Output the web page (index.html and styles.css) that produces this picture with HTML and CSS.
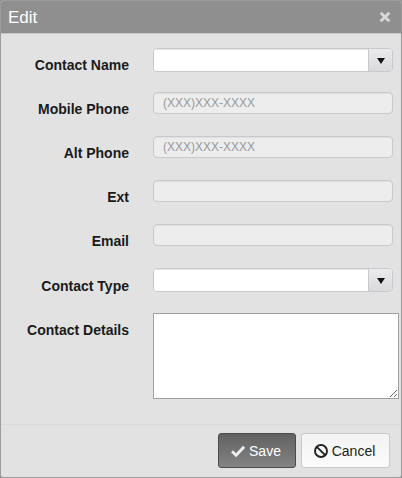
FILE: index.html
```
<!DOCTYPE html>
<html lang="en">
<head>
<meta charset="UTF-8">
<meta name="viewport" content="width=device-width, initial-scale=1.0">
<title>Edit</title>
<link rel="stylesheet" href="styles.css">
</head>
<body>

<div class="window">
  <header class="titlebar">
    <h1>Edit</h1>
    <button class="close-btn" aria-label="Close">
      <svg width="12" height="12" viewBox="0 0 12 12"><path d="M1.7 1.7l8.6 8.6M10.3 1.7l-8.6 8.6"/></svg>
    </button>
  </header>

  <form class="fields">
    <div class="row">
      <label for="name">Contact Name</label>
      <div class="combo">
        <input type="text" id="name">
        <span class="arrow"><svg width="8" height="6" viewBox="0 0 8 6"><path d="M0 0h8L4 6z"/></svg></span>
      </div>
    </div>
    <div class="row">
      <label for="mobile">Mobile Phone</label>
      <input class="textbox" type="text" id="mobile" placeholder="(XXX)XXX-XXXX">
    </div>
    <div class="row">
      <label for="alt">Alt Phone</label>
      <input class="textbox" type="text" id="alt" placeholder="(XXX)XXX-XXXX">
    </div>
    <div class="row">
      <label for="ext">Ext</label>
      <input class="textbox" type="text" id="ext">
    </div>
    <div class="row">
      <label for="email">Email</label>
      <input class="textbox" type="text" id="email">
    </div>
    <div class="row row-type">
      <label for="type">Contact Type</label>
      <div class="combo">
        <input type="text" id="type">
        <span class="arrow"><svg width="8" height="6" viewBox="0 0 8 6"><path d="M0 0h8L4 6z"/></svg></span>
      </div>
    </div>
    <div class="row row-details">
      <label for="details">Contact Details</label>
      <textarea id="details"></textarea>
    </div>
  </form>

  <footer class="buttons">
    <button class="btn save">
      <svg width="14" height="14" viewBox="0 0 14 14"><path d="M1 7.4l4.1 3.8 8-8.4"/></svg>
      Save
    </button>
    <button class="btn cancel">
      <svg width="14" height="14" viewBox="0 0 14 14"><circle cx="7" cy="7" r="6"/><path d="M2.8 2.8l8.4 8.4"/></svg>
      Cancel
    </button>
  </footer>
</div>

</body>
</html>
```

FILE: styles.css
```
* {
  box-sizing: border-box;
}
body {
  margin: 0;
  background: #8f8f8f;
  font-family: "Liberation Sans", Arial, sans-serif;
  font-size: 14px;
  color: #1a1a1a;
}
.window {
  display: flex;
  flex-direction: column;
  width: 402px;
  height: 478px;
  background: #e2e2e2;
  border: 1px solid #9b9b9b;
  border-radius: 3px;
  overflow: hidden;
}

/* title bar */
.titlebar {
  display: flex;
  justify-content: space-between;
  align-items: center;
  height: 33px;
  padding: 0 10px 0 7px;
  background: #8f8f8f;
  border-bottom: 1px solid #c6c6c6;
}
.titlebar h1 {
  margin: 0;
  padding-top: 1px;
  font-size: 17px;
  font-weight: normal;
  line-height: 32px;
  color: #fff;
}
.close-btn {
  display: flex;
  padding: 0;
  border: none;
  background: none;
  cursor: pointer;
}
.close-btn path {
  fill: none;
  stroke: #d9d9d9;
  stroke-width: 2.8;
}

/* form rows */
.fields {
  flex: 1;
  padding: 14px 0 0;
}
.row {
  display: grid;
  grid-template-columns: 128px 1fr;
  column-gap: 24px;
  align-items: start;
  height: 44px;
}
.row label {
  padding-top: 7px;
  line-height: 20px;
  font-weight: bold;
  text-align: right;
}
.row-type {
  height: 45px;
}
.row-type label {
  padding-top: 8px;
}
.row-details {
  height: 86px;
}
.textbox {
  width: 240px;
  height: 22px;
  padding: 0 9px;
  border: 1px solid #c9c9cd;
  border-radius: 4px;
  background: #ededed;
  box-shadow: inset 0 1px 1px #dfdfe1;
  font: 12px/20px "Liberation Sans", Arial, sans-serif;
}
.textbox::placeholder {
  color: #999;
}
.combo {
  display: flex;
  width: 240px;
  height: 24px;
  border: 1px solid #c9c9cd;
  border-radius: 4px;
  background: #fff;
  overflow: hidden;
}
.combo input {
  flex: 1;
  min-width: 0;
  padding: 0 8px;
  border: none;
  background: #fff;
  box-shadow: inset 0 1px 1px #e4e4e6;
}
.arrow {
  display: flex;
  justify-content: center;
  align-items: center;
  width: 24px;
  padding-top: 2px;
  border-left: 1px solid #c9c9cd;
  background: linear-gradient(#ebebed, #dadadd);
}
.arrow path {
  fill: #111;
}
textarea {
  width: 246px;
  height: 86px;
  border: 1px solid #a0a0a0;
  background: #fff;
}

/* bottom buttons */
.buttons {
  display: flex;
  justify-content: flex-end;
  gap: 5px;
  height: 53px;
  padding: 8px 11px 0 0;
  border-top: 1px solid #dadada;
}
.btn {
  display: flex;
  align-items: center;
  justify-content: center;
  gap: 4px;
  height: 35px;
  padding: 0 2px 0 0;
  border: 1px solid #cacaca;
  border-radius: 3px;
  font: 14px "Liberation Sans", Arial, sans-serif;
  cursor: pointer;
}
.btn path,
.btn circle {
  fill: none;
  stroke: currentColor;
  stroke-width: 1.9;
}
.save {
  width: 78px;
  border-color: #4b4b4b;
  background: linear-gradient(#626262, #838383);
  color: #fff;
}
.save path {
  stroke: #ededed;
  stroke-width: 2.8;
}
.cancel {
  width: 89px;
  background: linear-gradient(#f3f3f3, #fbfbfb);
  color: #222;
}
```
